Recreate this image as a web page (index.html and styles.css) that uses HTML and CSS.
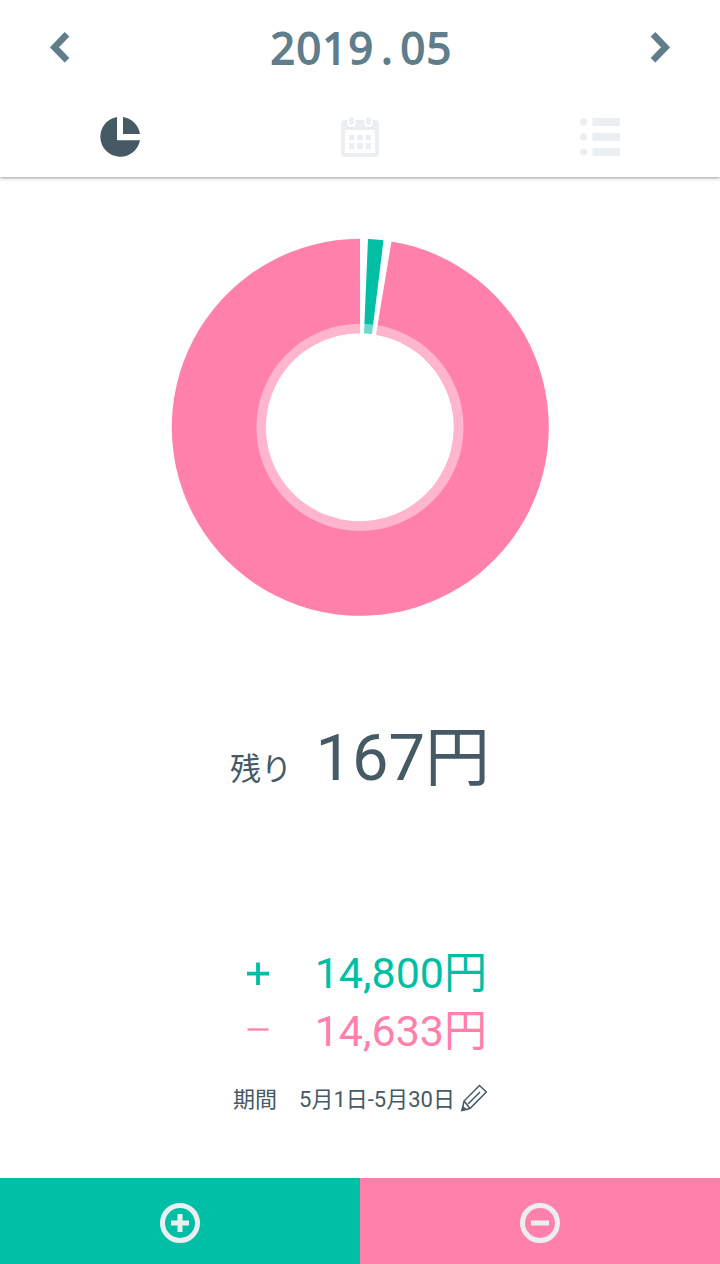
FILE: index.html
```html
<!DOCTYPE html>
<html lang="ja">
<head>
<meta charset="utf-8">
<title>2019.05</title>
<link rel="stylesheet" href="styles.css">
</head>
<body>
<div class="app">
  <header class="header">
    <div class="month">
      <svg class="arrow" width="20" height="32" viewBox="0 0 20 32"><path d="M17 3.300 4.500 16.300 17 29.300"/></svg>
      <h1 class="title">2019<span class="dot">.</span>05</h1>
      <svg class="arrow" width="20" height="32" viewBox="0 0 20 32"><path d="M3 3.300 15.500 16.300 3 29.300"/></svg>
    </div>
    <nav class="tabs">
      <a class="tab active"><svg width="40" height="40" viewBox="0 0 40 40"><path d="M17 0V23.300H40A20 20 0 1 1 17 0ZM23 0A20 20 0 0 1 40 17H23Z"/></svg></a>
      <a class="tab"><svg width="40" height="40" viewBox="0 0 40 40"><path fill-rule="evenodd" d="M5 3H7.500V6A4 4 0 0 0 15.500 6V3H24.500V6A4 4 0 0 0 32.500 6V3H35Q39 3 39 7V36Q39 40 35 40H5Q1 40 1 36V7Q1 3 5 3ZM5 13V36H35V13Z"/><rect x="9.300" y="0" width="4.600" height="8" rx="2.300"/><rect x="26.100" y="0" width="4.600" height="8" rx="2.300"/><path d="M9 18h5v5H9zM17 18h6v5h-6zM26 18h5v5h-5zM9 26h5v6H9zM17 26h6v6h-6zM26 26h5v6h-5z"/></svg></a>
      <a class="tab"><svg width="40" height="40" viewBox="0 0 40 40"><circle cx="3.700" cy="5" r="3.700"/><circle cx="3.700" cy="20" r="3.700"/><circle cx="3.700" cy="35" r="3.700"/><path d="M12.500 1H40v8H12.500zM12.500 16H40v8H12.500zM12.500 31H40v8H12.500z"/></svg></a>
    </nav>
  </header>
  <main class="content">
    <svg class="chart" width="378" height="378" viewBox="171 238.200 378 378">
      <path class="out" d="M360 239A188.500 188.500 0 1 0 391.500 241.600L376 334.900A94 94 0 1 1 360 333.500Z"/>
      <path class="in" d="M368 239.200A188.500 188.500 0 0 1 383.500 240.500L372 334.200A94 94 0 0 0 364 333.500Z"/>
      <circle class="halo" cx="360" cy="427.500" r="98.800"/>
    </svg>
    <div class="balance"><span class="label">残り</span><span class="amount">167円</span></div>
    <div class="totals">
      <div class="row income"><span class="sign"><svg width="24" height="24" viewBox="0 0 24 24"><path d="M1 12.700H23M12 1.500V24" stroke-width="3.800"/></svg></span><span>14,800円</span></div>
      <div class="row expense"><span class="sign"><svg width="24" height="24" viewBox="0 0 24 24"><path d="M1.500 10.500H22.500" stroke-width="2.300"/></svg></span><span>14,633円</span></div>
    </div>
    <div class="period"><span>期間</span><span class="range">5月1日-5月30日</span>
      <svg class="pencil" width="28" height="28" viewBox="0 0 28 28"><path d="M19.500 1.500 26.300 8 10 24.500 2 26.500 4 17ZM4 17 10 24.500M8 20 20 8"/><path class="tip" d="M2.800 21.500 6.500 25.300 1 27Z"/></svg>
    </div>
  </main>
  <footer class="actions">
    <button class="add"><svg width="40" height="40" viewBox="0 0 40 40"><circle cx="20" cy="20" r="17.500"/><path d="M11 20H29M20 11V29"/></svg></button>
    <button class="subtract"><svg width="40" height="40" viewBox="0 0 40 40"><circle cx="20" cy="20" r="17.500"/><path d="M11 20H29"/></svg></button>
  </footer>
</div>
</body>
</html>
```
FILE: styles.css
```css
* { box-sizing: border-box; }
body { margin: 0; background: #fefefe; color: #455a64; font-family: Roboto, "Noto Sans CJK JP", sans-serif; }
.app { height: 1264px; display: flex; flex-direction: column; overflow: hidden; }
.header { height: 177px; background: #fff; box-shadow: 0 1px 3px rgba(0,0,0,.4); }
.month { height: 96px; padding: 0 50px 2px; display: flex; align-items: center; justify-content: space-between; }
.arrow { fill: none; stroke: #607d8b; stroke-width: 6.600; }
.title { margin: 0; padding: 2px 0 0 3px; font: 400 43px/60px "Open Sans", "Noto Sans", sans-serif; letter-spacing: 1.4px; color: #607d8b; -webkit-text-stroke: 1.8px #607d8b; }
.dot { display: inline-block; width: 26px; text-align: center; }
.tabs { height: 81px; display: grid; grid-template-columns: repeat(3, 1fr); }
.tab { display: flex; justify-content: center; align-items: center; fill: #eceff1; }
.tab.active { fill: #455a64; }
.content { flex: 1; display: flex; flex-direction: column; align-items: center; }
.chart { margin-top: 61px; flex: none; }
.out { fill: #ff80ab; }
.in { fill: #00bfa5; }
.halo { fill: none; stroke: #fff; stroke-opacity: .42; stroke-width: 9.600; }
.balance { width: 260px; height: 94px; margin-top: 95px; line-height: 94px; display: flex; align-items: baseline; justify-content: space-between; }
.label { font-size: 31px; }
.amount { font-size: 65px; }
.totals { width: 240px; margin-top: 139px; }
.row { height: 58px; padding-left: 6px; display: flex; align-items: center; justify-content: space-between; font-size: 43px; line-height: 58px; margin-right: -7px; }
.sign { display: flex; fill: none; }
.income { color: #00bfa5; }
.expense { color: #ff80ab; }
.sign path { stroke: currentColor; }
.period { width: 254px; height: 36px; margin-top: 22px; display: flex; align-items: center; font-size: 22px; line-height: 36px; white-space: nowrap; }
.range { margin-left: 22px; }
.pencil { margin: 0 -1px 4px auto; fill: none; stroke: #455a64; stroke-width: 1.500; }
.tip { fill: #455a64; stroke: none; }
.actions { height: 86px; display: grid; grid-template-columns: 1fr 1fr; }
.actions button { border: 0; padding: 4px 0 0; display: flex; align-items: center; justify-content: center; }
.actions svg { fill: none; stroke: #eceff1; stroke-width: 5; stroke-linejoin: round; }
.add { background: #00bfa5; }
.subtract { background: #ff80ab; }
```
